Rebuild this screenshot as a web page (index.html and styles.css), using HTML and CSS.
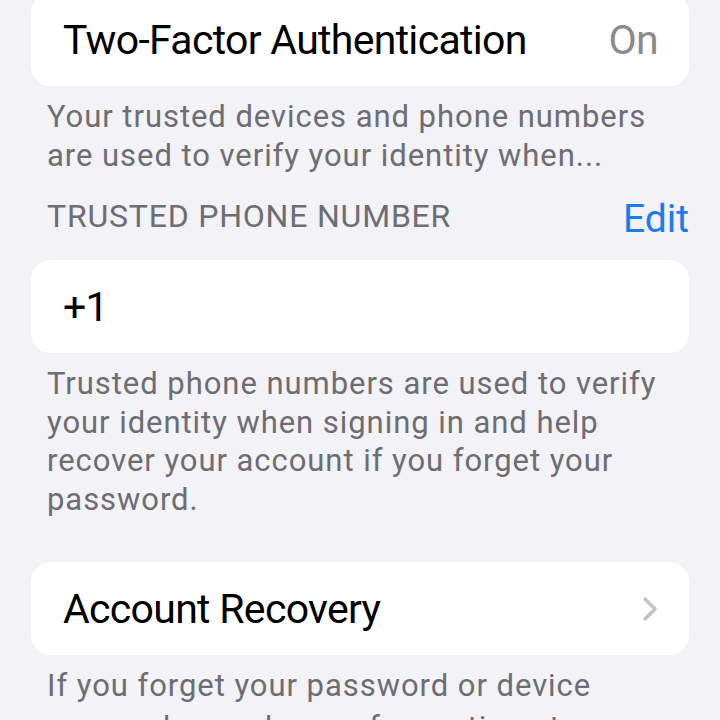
FILE: index.html
```html
<!DOCTYPE html>
<html>
<head>
<meta charset="utf-8">
<link rel="stylesheet" href="styles.css">
</head>
<body>
<main class="page">
  <section class="card card-first">
    <div class="row">
      <span class="label">Two-Factor Authentication</span>
      <span class="value">On</span>
    </div>
  </section>
  <p class="footer footer-first">Your trusted devices and phone numbers are used to verify your identity when...</p>

  <div class="header">
    <span class="header-title">TRUSTED PHONE NUMBER</span>
    <span class="header-action">Edit</span>
  </div>
  <section class="card">
    <div class="row">
      <span class="label">+1</span>
    </div>
  </section>
  <p class="footer">Trusted phone numbers are used to verify your identity when signing in and help recover your account if you forget your password.</p>

  <section class="card card-spaced">
    <div class="row">
      <span class="label">Account Recovery</span>
      <svg class="chevron" width="16" height="26" viewBox="0 0 16 26"><polyline points="3,3 13,13 3,23" fill="none" stroke="#c4c4c7" stroke-width="3.4" stroke-linecap="round" stroke-linejoin="round"/></svg>
    </div>
  </section>
  <p class="footer footer-last">If you forget your password or device passcode, you have a few options to recover your data.</p>
</main>
</body>
</html>
```

FILE: styles.css
```css
html, body {
  margin: 0;
  padding: 0;
  background: #f2f2f7;
  height: 100%;
  overflow: hidden;
}

.page {
  padding: 0 31px;
  font-family: Roboto, "Liberation Sans", sans-serif;
  -webkit-font-smoothing: antialiased;
}

.card {
  background: #ffffff;
  border-radius: 20px;
}

.card-first {
  margin-top: -7px;
}

.card-spaced {
  margin-top: 43px;
}

.row {
  height: 93px;
  display: flex;
  align-items: center;
  justify-content: space-between;
  padding: 0 31px 0 32px;
}

.label {
  font-size: 41px;
  color: #000000;
  letter-spacing: -0.7px;
}

.value {
  font-size: 41px;
  color: #8a8a8e;
  letter-spacing: -0.7px;
}

.chevron {
  display: block;
}

.footer {
  margin: 0;
  padding: 12px 16px 0 16px;
  font-size: 31px;
  line-height: 38.5px;
  color: #6d6d72;
  letter-spacing: 0.95px;
}

.footer-first {
  height: 77px;
  overflow: hidden;
}

.footer-last {
  padding-top: 10px;
  line-height: 42px;
}

.header {
  box-sizing: border-box;
  display: flex;
  justify-content: space-between;
  align-items: flex-start;
  padding: 25px 0 0 16px;
  height: 85px;
}

.header-title {
  font-size: 32px;
  color: #6d6d72;
  line-height: 32px;
  letter-spacing: 0.8px;
}

.header-action {
  font-size: 39px;
  color: #1a7cf0;
  line-height: 39px;
}
```
